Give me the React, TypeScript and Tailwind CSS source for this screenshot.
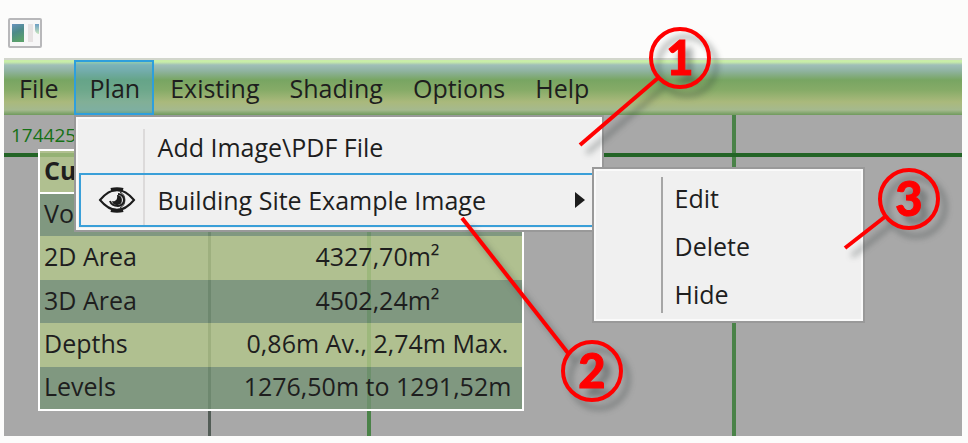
import type { ReactNode } from "react"

const menus = ["File", "Plan", "Existing", "Shading", "Options", "Help"]

const stats = [
  { label: "Vo", value: "" },
  { label: "2D Area", value: "4327,70m²" },
  { label: "3D Area", value: "4502,24m²" },
  { label: "Depths", value: "0,86m Av., 2,74m Max." },
  { label: "Levels", value: "1276,50m to 1291,52m" },
]

const callouts = [
  { n: 1, cx: 680, cy: 58, x1: 658, y1: 78, x2: 580, y2: 145 },
  { n: 2, cx: 592, cy: 371, x1: 568, y1: 353, x2: 462, y2: 218 },
  { n: 3, cx: 909, cy: 199, x1: 886, y1: 216, x2: 845, y2: 248 },
]

function WindowIcon() {
  return (
    <svg viewBox="0 0 34 30" className="w-[34px] h-[30px]" aria-hidden="true">
      <defs>
        <linearGradient id="pane" x1="0" y1="0" x2="0.3" y2="1">
          <stop offset="0" stopColor="#6792bd" />
          <stop offset="0.5" stopColor="#4c8a88" />
          <stop offset="1" stopColor="#5aa06c" />
        </linearGradient>
        <linearGradient id="paneLight" x1="0" y1="0" x2="0" y2="1">
          <stop offset="0" stopColor="#6d9fc4" />
          <stop offset="1" stopColor="#c9e6bd" />
        </linearGradient>
      </defs>
      <rect x="1" y="1" width="32" height="28" rx="1" fill="#f7f7f7" stroke="#b8b8ba" strokeWidth="2" />
      <rect x="4" y="6" width="12" height="18" fill="url(#pane)" />
      <rect x="20" y="6" width="5" height="18" fill="#e6e2e2" />
      <path d="M27 6h4v10c-2 0-4-2-4-4Z" fill="url(#paneLight)" />
    </svg>
  )
}

function EyeIcon() {
  return (
    <svg viewBox="0 0 38 26" className="w-[38px] h-[26px]" fill="none" stroke="#1c1c1c" aria-hidden="true">
      <path d="M2 13C7 7 12 3 19 3s12 4 17 10c-5 6-10 10-17 10S7 19 2 13Z" strokeWidth="2" />
      <path d="M13 3c4-1 8-1 12 0M13 23c4 1 8 1 12 0" strokeWidth="4" />
      <path d="M22 5a9 9 0 0 1 0 16" strokeWidth="1" />
      <path d="M20 7a6 6 0 0 1 0 12c-4 0-7-2-8-5" strokeWidth="2" />
      <path d="M19 8a5 5 0 1 1-5 6c3 1 6-1 5-6Z" fill="#1c1c1c" stroke="none" />
    </svg>
  )
}

function GridLines() {
  return (
    <svg className="absolute inset-0 w-full h-full" aria-hidden="true">
      <rect x="204" width="3" height="100%" fill="#525c56" />
      <rect x="363" width="4" height="100%" fill="#4a8248" />
      <rect x="728" width="4" height="100%" fill="#4a8248" />
      <rect y="38" width="100%" height="4" fill="#236426" />
    </svg>
  )
}

function Popup({ children, className }: { children: ReactNode; className: string }) {
  return (
    <ul className={`absolute border-2 border-[#999999] bg-[#f0f0f0] text-left shadow-[inset_0_0_0_2px_#fafafa] ${className}`}>
      {children}
    </ul>
  )
}

function PlanMenu() {
  return (
    <Popup className="left-0 top-full z-10 w-[530px] px-[3px] pb-[3px] pt-1">
      <li>
        <button className="flex h-[52px] w-full items-center text-left">
          <span className="mt-2 w-[66px] self-stretch border-r-2 border-[#dcdada]" />
          <span className="ml-[13px]">Add Image\PDF File</span>
        </button>
      </li>
      <li className="relative">
        <button className="flex h-[54px] w-full items-center border-2 border-[#3a9fd8] text-left">
          <span className="flex w-16 items-center justify-center self-stretch border-r-2 border-[#dcdada] pl-[10px]">
            <EyeIcon />
          </span>
          <span className="ml-[13px] flex-1">Building Site Example Image</span>
          <svg viewBox="0 0 10 16" className="mr-3 h-4 w-[10px]" aria-hidden="true">
            <path d="M0 0l10 8-10 8z" fill="#1c1c1c" />
          </svg>
        </button>
        <Popup className="-top-[6px] left-[513px] w-[273px] px-2 pb-[3px] pt-[5px]">
          <li className="absolute inset-y-2 left-[67px] border-l-2 border-[#a6a6a6]" role="separator" />
          {["Edit", "Delete", "Hide"].map((item) => (
            <li key={item}>
              <button className="block h-12 w-full pl-[73px] text-left">{item}</button>
            </li>
          ))}
        </Popup>
      </li>
    </Popup>
  )
}

function MenuBar() {
  return (
    <nav className="border-t-2 border-[#d2d6cc] bg-[linear-gradient(to_bottom,#c8eda8_0px,#c8eda8_2px,#a0bfb8_5px,#8fb3a0_11px,#78a562_20px,#86ab67_30px,#aab97c_42px,#a5b98e_50px,#6f9a5c_55px)]">
      <ul className="flex">
        {menus.map((name) => (
          <li key={name} className={name === "Plan" ? "relative mr-px" : ""}>
            <button
              className={
                name === "Plan"
                  ? "h-[55px] border-2 border-[#2e9fdc] bg-[#4fa5b8]/45 pl-[14px] pr-3"
                  : "h-[55px] px-[15px]"
              }
            >
              {name}
            </button>
            {name === "Plan" && <PlanMenu />}
          </li>
        ))}
      </ul>
    </nav>
  )
}

function StatsTable() {
  return (
    <table className="relative w-[486px] table-fixed border-collapse border-2 border-white">
      <colgroup>
        <col className="w-[194px]" />
        <col />
      </colgroup>
      <thead>
        <tr className="h-[43px] border-b-2 border-white bg-[#b1c58a]/80">
          <th colSpan={2} className="pb-1 pl-1 text-left font-bold">
            Cu
          </th>
        </tr>
      </thead>
      <tbody>
        {stats.map((row, i) => (
          <tr key={row.label} className={i % 2 ? "h-11 bg-[#b1c58a]/80" : "h-[43px] bg-[#759475]/80"}>
            <th scope="row" className="pb-1 pl-1 text-left font-normal">
              {row.label}
            </th>
            <td className="pb-1 text-center">{row.value}</td>
          </tr>
        ))}
      </tbody>
    </table>
  )
}

function Callouts() {
  return (
    <svg className="pointer-events-none absolute inset-0 z-20 h-full w-full">
      {callouts.map((c) => (
        <g key={c.n} className="drop-shadow-[7px_8px_3px_rgba(40,50,50,0.4)]">
          <line x1={c.x1} y1={c.y1} x2={c.x2} y2={c.y2} stroke="#ff0000" strokeWidth="4" />
          <circle cx={c.cx} cy={c.cy} r="29" fill="none" stroke="#ff0000" strokeWidth="4" />
          <text
            x={c.cx}
            y={c.cy + 17}
            textAnchor="middle"
            fill="#ff0000"
            stroke="#ff0000"
            strokeWidth="1"
            className="font-['Lato',sans-serif] text-[47px] font-black"
          >
            {c.n}
          </text>
        </g>
      ))}
    </svg>
  )
}

export default function App() {
  return (
    <div className="relative bg-[#fcfcfb] pb-[7px] pl-1 pr-[6px] font-['Open_Sans',sans-serif] text-[25px] leading-8 text-[#1e1e1e]">
      <header className="flex h-[58px] items-center pl-1 pt-2">
        <WindowIcon />
      </header>
      <MenuBar />
      <main className="relative bg-[#a8a8a8] pb-[25px] pl-[34px] pt-[34px]">
        <GridLines />
        <span className="absolute left-[7px] top-1 text-[19px] text-[#157015]">174425</span>
        <StatsTable />
      </main>
      <Callouts />
    </div>
  )
}
